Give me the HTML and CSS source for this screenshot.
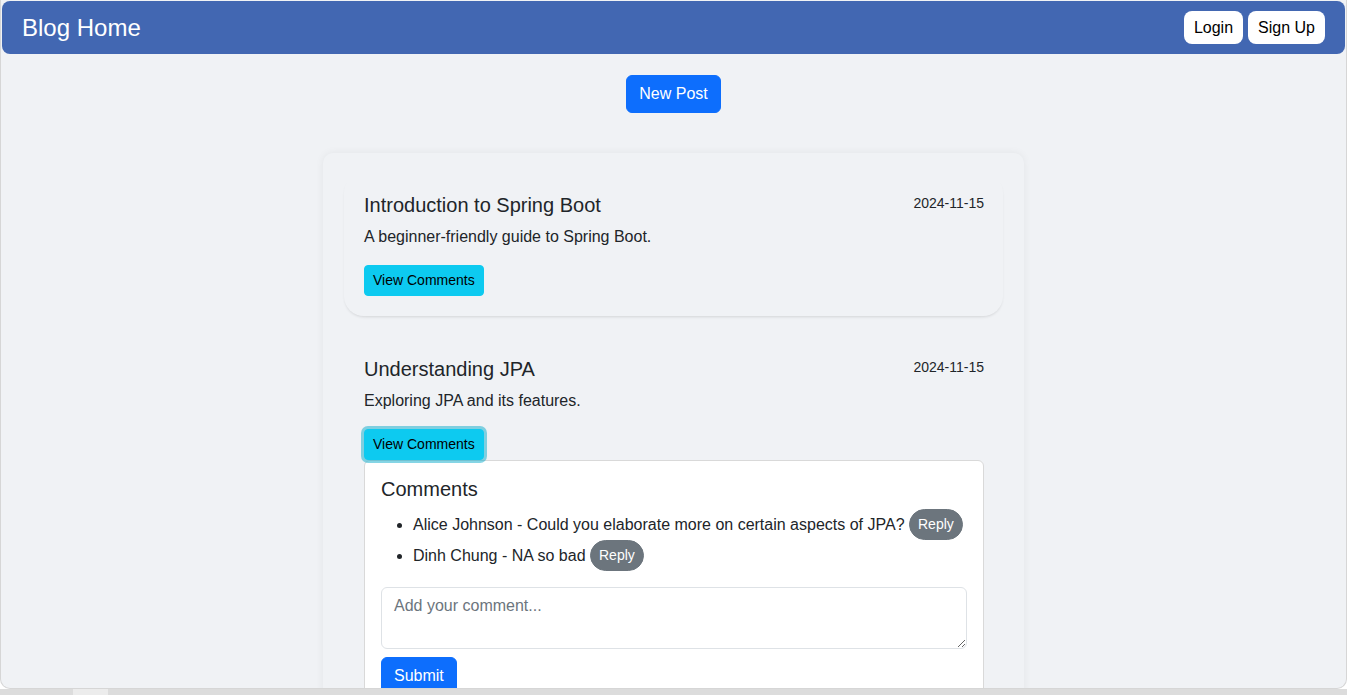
FILE: index.html
```html
<!DOCTYPE html>
<html lang="en">
<head>
<meta charset="utf-8">
<title>Blog Home</title>
<link rel="stylesheet" href="styles.css">
</head>
<body>
<div class="frame">
  <header class="topbar">
    <div class="brand">Blog Home</div>
    <nav class="auth">
      <button class="auth-btn">Login</button>
      <button class="auth-btn">Sign Up</button>
    </nav>
  </header>

  <div class="actions">
    <button class="btn btn-primary">New Post</button>
  </div>

  <main class="posts">
    <article class="post post-raised">
      <div class="post-head">
        <h5 class="post-title">Introduction to Spring Boot</h5>
        <span class="post-date">2024-11-15</span>
      </div>
      <p class="post-desc">A beginner-friendly guide to Spring Boot.</p>
      <button class="btn btn-sm btn-info">View Comments</button>
    </article>

    <article class="post">
      <div class="post-head">
        <h5 class="post-title">Understanding JPA</h5>
        <span class="post-date">2024-11-15</span>
      </div>
      <p class="post-desc">Exploring JPA and its features.</p>
      <button class="btn btn-sm btn-info btn-focus">View Comments</button>
      <section class="comments">
        <h5 class="comments-title">Comments</h5>
        <ul class="comment-list">
          <li>Alice Johnson - Could you elaborate more on certain aspects of JPA? <button class="btn btn-sm btn-secondary pill">Reply</button></li>
          <li>Dinh Chung - NA so bad <button class="btn btn-sm btn-secondary pill">Reply</button></li>
        </ul>
        <textarea class="form-control" rows="2" placeholder="Add your comment..."></textarea>
        <button class="btn btn-primary submit">Submit</button>
      </section>
    </article>
  </main>
</div>
<div class="hscroll"><div class="hscroll-thumb"></div></div>
</body>
</html>
```

FILE: styles.css
```css
* { box-sizing: border-box; }

html, body {
  margin: 0;
  padding: 0;
  height: 695px;
  overflow: hidden;
  background: #ffffff;
  font-family: "Liberation Sans", Arial, sans-serif;
  color: #212529;
  font-size: 16px;
  line-height: 1.5;
}

.frame {
  width: 1347px;
  height: 689px;
  background: #f0f2f5;
  border: 1px solid #d6d6d6;
  border-top: none;
  border-radius: 0 0 10px 10px;
  overflow: hidden;
  padding-top: 1px;
}

.topbar {
  margin: 0 1px;
  height: 53px;
  background: #4267b2;
  border-radius: 8px;
  display: flex;
  align-items: center;
  justify-content: space-between;
  padding: 0 20px 0 20px;
}

.brand {
  color: #ffffff;
  font-size: 24px;
  line-height: 1.2;
  padding-top: 2px;
}

.auth {
  display: flex;
  gap: 5px;
}

.auth-btn {
  font-family: inherit;
  font-size: 16px;
  line-height: 21px;
  color: #000;
  background: #ffffff;
  border: none;
  border-radius: 8px;
  padding: 6px 10px;
  height: 33px;
  margin-top: -1px;
}

.actions {
  display: flex;
  justify-content: center;
  margin-top: 21px;
}

.btn {
  font-family: inherit;
  display: inline-block;
  font-size: 16px;
  line-height: 24px;
  padding: 6px 12px;
  border: 1px solid transparent;
  border-radius: 6px;
  cursor: pointer;
  vertical-align: middle;
}

.btn-primary {
  background: #0d6efd;
  border-color: #0d6efd;
  color: #ffffff;
}

.btn-sm {
  font-size: 14px;
  line-height: 21px;
  padding: 4px 8px;
  border-radius: 4px;
}

.btn-info {
  background: #0dcaf0;
  border-color: #0dcaf0;
  color: #000000;
}

.btn-focus {
  box-shadow: 0 0 0 3px rgba(11, 172, 204, 0.5);
}

.btn-secondary {
  background: #6c757d;
  border-color: #6c757d;
  color: #ffffff;
}

.pill {
  border-radius: 50rem;
  padding: 4px 8px;
  vertical-align: top;
}

.posts {
  width: 701px;
  margin: 40px auto 0;
  padding: 20px 21px;
  background: #f0f2f5;
  border-radius: 10px;
  box-shadow: 0 0 8px rgba(0, 0, 0, 0.06);
  min-height: 600px;
}

.post {
  padding: 20px 19px 20px 20px;
  border-radius: 20px;
  margin-bottom: 21px;
}

.post-raised {
  box-shadow: 0 2px 3px -1px rgba(0, 0, 0, 0.12);
}

.post-head {
  display: flex;
  justify-content: space-between;
  align-items: flex-start;
}

.post-title {
  margin: 0 0 8px;
  font-size: 20px;
  line-height: 24px;
  font-weight: 500;
}

.post-date {
  font-size: 14px;
  line-height: 21px;
}

.post-desc {
  margin: 0 0 16px;
}

.comments {
  background: #ffffff;
  border: 1px solid #d9d9d9;
  border-radius: 6px;
  padding: 16px;
  margin-top: 0;
}

.comments-title {
  margin: 0 0 8px;
  font-size: 20px;
  line-height: 24px;
  font-weight: 500;
}

.comment-list {
  margin: 0 0 16px;
  padding-left: 32px;
}

.comment-list li {
  line-height: 31px;
  height: 31px;
}

.form-control {
  display: block;
  width: 100%;
  font-family: inherit;
  font-size: 16px;
  line-height: 24px;
  padding: 6px 12px;
  color: #212529;
  background: #fff;
  border: 1px solid #dee2e6;
  border-radius: 6px;
  resize: vertical;
  margin-bottom: 8px;
}

.form-control::placeholder {
  color: #6c757d;
}

.hscroll {
  width: 1347px;
  height: 6px;
  background: #dcdcdc;
  position: relative;
}

.hscroll-thumb {
  position: absolute;
  left: 73px;
  top: 0;
  width: 35px;
  height: 6px;
  background: #ececec;
}
```
